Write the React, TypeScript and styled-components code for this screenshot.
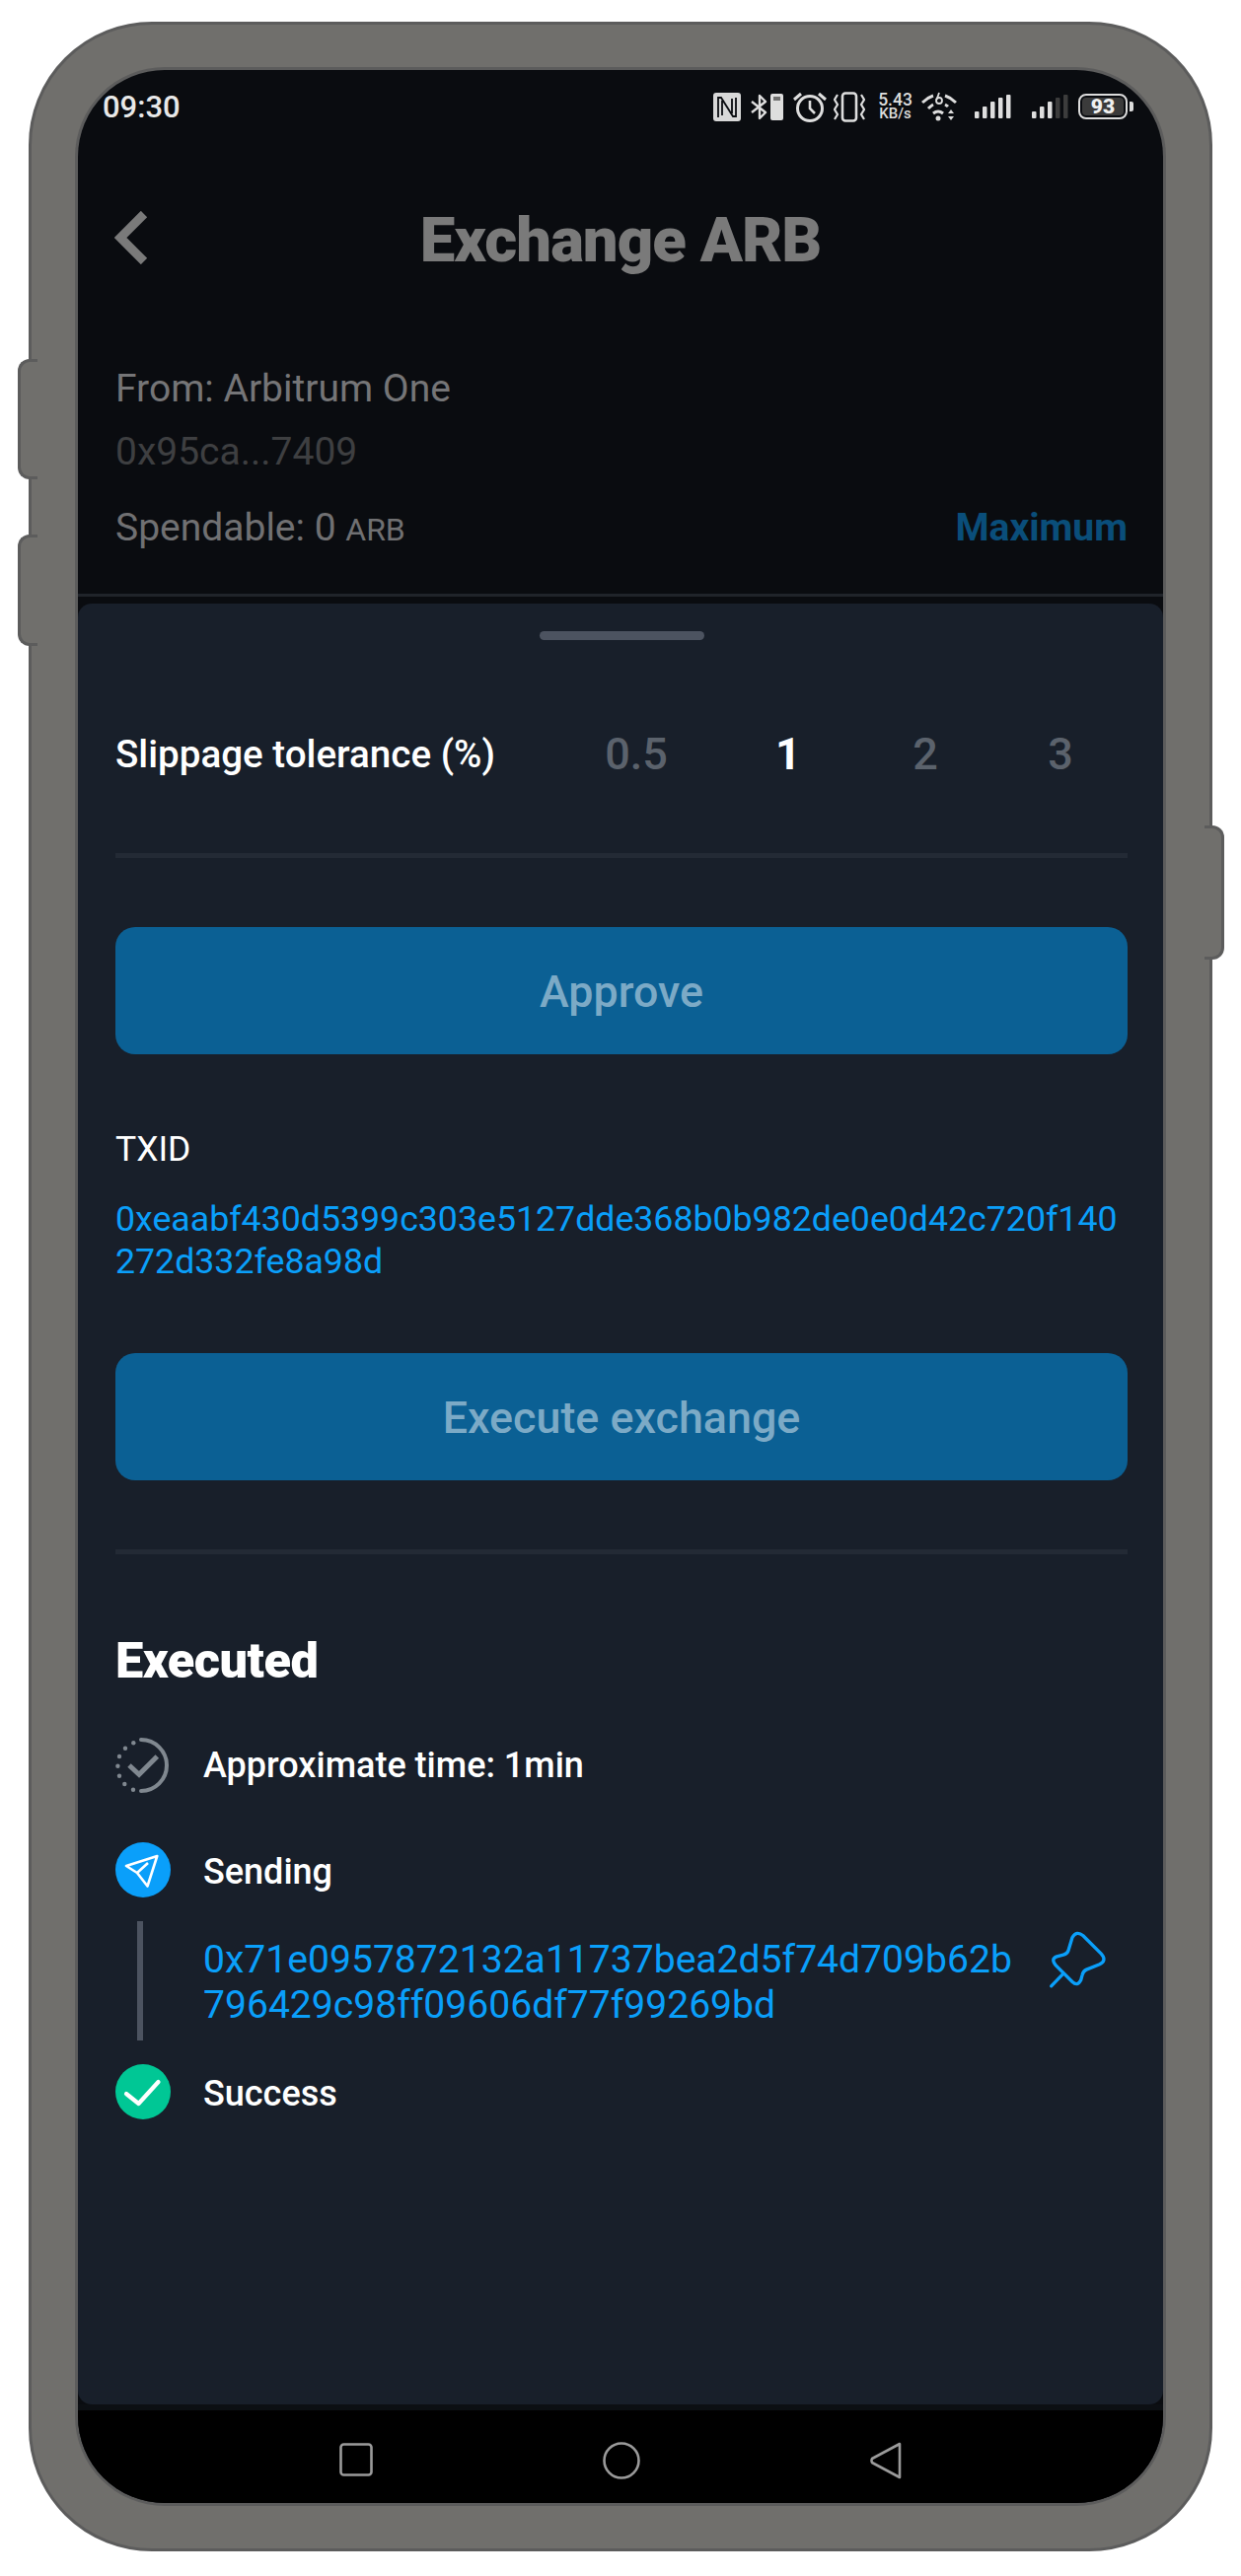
import styled, { createGlobalStyle } from "styled-components";

const GlobalStyle = createGlobalStyle`
  html, body {
    margin: 0;
    padding: 0;
    background: #ffffff;
  }
  body {
    font-family: Roboto, "Liberation Sans", sans-serif;
  }
`;

const Page = styled.div`
  width: 1258px;
  height: 2612px;
  box-sizing: border-box;
  padding: 22px 29px 25px;
`;

const Phone = styled.div`
  position: relative;
  width: 1200px;
  height: 2565px;
  box-sizing: border-box;
  padding: 46px 47px;
  background: #706f6c;
  border: 3px solid #5c5c5c;
  border-radius: 125px;
`;

const SideKey = styled.div<{ $side: "left" | "right"; $top: number; $height: number }>`
  position: absolute;
  top: ${(p) => p.$top}px;
  height: ${(p) => p.$height}px;
  width: 20px;
  box-sizing: border-box;
  background: #706f6c;
  border: 3px solid #5c5c5c;
  ${(p) =>
    p.$side === "left"
      ? "left: -14px; border-right: none; border-radius: 12px 0 0 12px;"
      : "right: -15px; border-left: none; border-radius: 0 12px 12px 0;"}
`;

const Screen = styled.div`
  height: 2467px;
  display: flex;
  flex-direction: column;
  overflow: hidden;
  background: #0a0c10;
  border-radius: 88px;
  box-shadow: 0 0 0 3px #5c5c5c;
`;

const Dimmed = styled.div`
  height: 534px;
  flex: none;
  box-sizing: border-box;
  border-bottom: 3px solid #20242a;
  margin-bottom: 7px;
`;

const StatusBar = styled.div`
  height: 74px;
  box-sizing: border-box;
  padding: 0 30px 0 25px;
  display: flex;
  align-items: center;
  justify-content: space-between;
`;

const Time = styled.span`
  font-size: 31px;
  font-weight: 500;
  color: #e8e8e8;
`;

const StatusIcons = styled.div`
  display: flex;
  align-items: center;
`;

const StatusIcon = styled.svg<{ $gap?: number }>`
  display: block;
  flex: none;
  margin-left: ${(p) => p.$gap ?? 9}px;
`;

const Speed = styled.div`
  width: 35px;
  margin-left: 13px;
  display: flex;
  flex-direction: column;
  align-items: center;
  color: #dedede;
  font-weight: 500;
  line-height: 14px;
`;

const SpeedValue = styled.span`
  font-size: 17.5px;
`;

const SpeedUnit = styled.span`
  font-size: 15px;
`;

const Battery = styled.div`
  margin-left: 10px;
  width: 56px;
  height: 24px;
  display: flex;
  align-items: center;
`;

const BatteryShell = styled.div`
  width: 50px;
  height: 26px;
  box-sizing: border-box;
  padding: 2px;
  border: 2px solid #dcdcdc;
  border-radius: 8px;
`;

const BatteryFill = styled.div`
  height: 100%;
  display: flex;
  align-items: center;
  justify-content: center;
  background: #3b3b3b;
  border-radius: 4px;
  color: #f0f0f0;
  font-size: 21px;
  font-weight: 900;
  line-height: 16px;
`;

const BatteryTip = styled.div`
  width: 4px;
  height: 10px;
  margin-left: 2px;
  background: #dcdcdc;
  border-radius: 0 2px 2px 0;
`;

const Header = styled.div`
  position: relative;
  height: 196px;
  display: flex;
  align-items: center;
  justify-content: center;
`;

const Back = styled.svg`
  position: absolute;
  left: 37px;
  top: 69px;
`;

const Title = styled.h1`
  margin: 0;
  font-size: 63.5px;
  font-weight: 900;
  letter-spacing: -1px;
  color: #7a7a7a;
`;

const Info = styled.div`
  margin-top: 21px;
  padding: 0 36px 0 38px;
`;

const InfoLine = styled.div<{ $tone?: string; $top?: number }>`
  height: 64px;
  margin-top: ${(p) => p.$top ?? 0}px;
  display: flex;
  align-items: center;
  justify-content: space-between;
  font-size: 39px;
  color: ${(p) => p.$tone ?? "#757577"};
`;

const Unit = styled.span`
  font-size: 32px;
`;

const Maximum = styled.span`
  font-weight: 700;
  color: #0a4e7a;
`;

const Sheet = styled.div`
  height: 1826px;
  flex: none;
  box-sizing: border-box;
  padding: 28px 36px 0 38px;
  display: flex;
  flex-direction: column;
  background: #181f2a;
  border-radius: 14px;
`;

const Handle = styled.div`
  width: 167px;
  height: 9px;
  margin: 0 auto;
  border-radius: 5px;
  background: #4c5360;
`;

const SlippageRow = styled.div`
  height: 80px;
  margin-top: 75px;
  display: flex;
  align-items: center;
  justify-content: space-between;
`;

const SlippageLabel = styled.span`
  font-size: 38.6px;
  font-weight: 500;
  color: #ffffff;
`;

const Options = styled.div`
  display: grid;
  grid-template-columns: 168px 140px 138px 136px;
  justify-items: center;
`;

const Option = styled.span<{ $active?: boolean }>`
  font-size: 45px;
  font-weight: ${(p) => (p.$active ? 700 : 500)};
  color: ${(p) => (p.$active ? "#ffffff" : "#5b626c")};
`;

const Divider = styled.div<{ $top: number }>`
  height: 5px;
  margin-top: ${(p) => p.$top}px;
  background: #232a35;
`;

const ActionButton = styled.button<{ $top: number }>`
  display: block;
  width: 100%;
  height: 129px;
  margin-top: ${(p) => p.$top}px;
  padding: 2px 0 0;
  border: none;
  border-radius: 20px;
  background: #0b6094;
  color: #7caac6;
  font-family: inherit;
  font-size: 44.8px;
  font-weight: 500;
`;

const TxLabel = styled.div`
  height: 44px;
  margin-top: 74px;
  display: flex;
  align-items: center;
  font-size: 35.5px;
  color: #ffffff;
`;

const TxHash = styled.div`
  margin-top: 28px;
  font-size: 35.7px;
  line-height: 43px;
  color: #0a9ffa;
  word-break: break-all;
`;

const SectionTitle = styled.h2`
  height: 60px;
  margin: 77px 0 2px;
  display: flex;
  align-items: center;
  font-size: 50.5px;
  font-weight: 900;
  letter-spacing: -0.5px;
  color: #ffffff;
`;

const Step = styled.div<{ $top: number }>`
  height: 56px;
  margin-top: ${(p) => p.$top}px;
  display: flex;
  align-items: center;
  gap: 33px;
`;

const StepLabel = styled.span<{ $drop?: number }>`
  padding-top: ${(p) => p.$drop ?? 0}px;
  font-size: 36px;
  font-weight: 500;
  color: #ffffff;
`;

const Badge = styled.div<{ $color: string }>`
  width: 56px;
  height: 56px;
  flex: none;
  border-radius: 50%;
  background: ${(p) => p.$color};
`;

const HashRow = styled.div`
  height: 121px;
  margin-top: 24px;
  display: flex;
  align-items: center;
`;

const Connector = styled.div`
  width: 6px;
  height: 100%;
  margin: 0 61px 0 22px;
  flex: none;
  background: #4c5360;
`;

const StepHash = styled.div`
  width: 835px;
  flex: none;
  padding-top: 3px;
  font-size: 39.1px;
  line-height: 46px;
  color: #0a9ffa;
  word-break: break-all;
`;

const Pin = styled.svg`
  flex: none;
  align-self: flex-start;
  margin: 8px 0 0 22px;
`;

const BottomBand = styled.div`
  height: 6px;
  flex: none;
  background: #0c0f13;
`;

const NavBar = styled.div`
  flex: 1;
  display: flex;
  align-items: flex-start;
  justify-content: center;
  gap: 233px;
  padding-top: 32px;
  background: #000000;
`;

const signalBars = [
  [0, 7],
  [8, 12],
  [16, 17],
  [24, 21],
  [32, 24],
];

function Signal({ dim, gap }: { dim: number; gap: number }) {
  return (
    <StatusIcon $gap={gap} width="37" height="24" viewBox="0 0 37 24">
      {signalBars.map(([x, h], i) => (
        <rect
          key={x}
          x={x}
          y={24 - h}
          width="4.5"
          height={h}
          rx="1"
          fill={i >= signalBars.length - dim ? "#3c3c3c" : "#dedede"}
        />
      ))}
    </StatusIcon>
  );
}

export default function App() {
  return (
    <>
      <GlobalStyle />
      <Page>
        <Phone>
          <SideKey $side="left" $top={339} $height={122} />
          <SideKey $side="left" $top={517} $height={113} />
          <SideKey $side="right" $top={812} $height={136} />
          <Screen>
            <Dimmed>
              <StatusBar>
                <Time>09:30</Time>
                <StatusIcons>
                  <StatusIcon $gap={0} width="28" height="29" viewBox="0 0 28 29">
                    <rect x="0" y="0" width="28" height="29" rx="3" fill="#d8d8d8" />
                    <path
                      d="M5 25V5h3l12 19h3V5M9 8v15M19 6v15"
                      fill="none"
                      stroke="#0a0c10"
                      strokeWidth="1.8"
                    />
                  </StatusIcon>
                  <StatusIcon width="35" height="29" viewBox="0 0 35 29" fill="none">
                    <path
                      d="M2 9l14 11-6 6V3l6 6L2 20"
                      stroke="#dedede"
                      strokeWidth="2.4"
                      strokeLinejoin="round"
                    />
                    <rect x="21" y="1" width="13" height="27" rx="2" fill="#dedede" />
                    <rect x="24" y="4" width="7" height="4" fill="#70706f" />
                  </StatusIcon>
                  <StatusIcon width="34" height="31" viewBox="0 0 34 31" fill="none" stroke="#dedede">
                    <circle cx="17" cy="17" r="12.5" strokeWidth="3" />
                    <path d="M17 9v8l5 5" strokeWidth="2.6" />
                    <path d="M1 8l7-6M33 8l-7-6" strokeWidth="3" />
                  </StatusIcon>
                  <StatusIcon $gap={7} width="32" height="31" viewBox="0 0 32 31" fill="none" stroke="#dedede">
                    <rect x="9" y="1.5" width="14" height="28" rx="3" strokeWidth="2.6" />
                    <path d="M4 3L1 8l3 5-3 5 3 5-3 5M28 3l3 5-3 5 3 5-3 5 3 5" strokeWidth="2.2" />
                  </StatusIcon>
                  <Speed>
                    <SpeedValue>5.43</SpeedValue>
                    <SpeedUnit>KB/s</SpeedUnit>
                  </Speed>
                  <StatusIcon width="36" height="30" viewBox="0 0 36 30" fill="none" stroke="#dedede">
                    <path d="M1 11Q6 6 12 4M24 4Q30 6 35 11" strokeWidth="3" />
                    <path d="M7 17Q10 14 12 13M24 13Q26 14 27 15" strokeWidth="3" />
                    <path d="M12 22Q17 18 22 22" strokeWidth="3" />
                    <circle cx="17" cy="27" r="2.5" fill="#dedede" stroke="none" />
                    <circle cx="18" cy="9" r="3" strokeWidth="1.8" />
                    <path d="M15.5 8L18 1" strokeWidth="1.8" />
                    <path d="M27 22l3-4 3 4zM27 25h6l-3 4z" fill="#dedede" stroke="none" />
                  </StatusIcon>
                  <Signal dim={0} gap={18} />
                  <Signal dim={2} gap={21} />
                  <Battery>
                    <BatteryShell>
                      <BatteryFill>93</BatteryFill>
                    </BatteryShell>
                    <BatteryTip />
                  </Battery>
                </StatusIcons>
              </StatusBar>
              <Header>
                <Back width="34" height="54" viewBox="0 0 34 54" fill="none">
                  <path d="M30 3L6 27l24 24" stroke="#7a7a7a" strokeWidth="9" />
                </Back>
                <Title>Exchange ARB</Title>
              </Header>
              <Info>
                <InfoLine>From: Arbitrum One</InfoLine>
                <InfoLine $tone="#3e3f41">0x95ca...7409</InfoLine>
                <InfoLine $tone="#707072" $top={13}>
                  <span>
                    Spendable: 0 <Unit>ARB</Unit>
                  </span>
                  <Maximum>Maximum</Maximum>
                </InfoLine>
              </Info>
            </Dimmed>
            <Sheet>
              <Handle />
              <SlippageRow>
                <SlippageLabel>Slippage tolerance (%)</SlippageLabel>
                <Options>
                  <Option>0.5</Option>
                  <Option $active>1</Option>
                  <Option>2</Option>
                  <Option>3</Option>
                </Options>
              </SlippageRow>
              <Divider $top={61} />
              <ActionButton $top={70}>Approve</ActionButton>
              <TxLabel>TXID</TxLabel>
              <TxHash>0xeaabf430d5399c303e5127dde368b0b982de0e0d42c720f140272d332fe8a98d</TxHash>
              <ActionButton $top={71}>Execute exchange</ActionButton>
              <Divider $top={70} />
              <SectionTitle>Executed</SectionTitle>
              <Step $top={47}>
                <svg width="56" height="56" viewBox="0 0 56 56" fill="none">
                  <path d="M26 2a26 26 0 0 1 0 52" stroke="#808890" strokeWidth="4" strokeLinecap="round" />
                  <g fill="#808890">
                    <circle cx="18.3" cy="5.3" r="2.2" />
                    <circle cx="10" cy="10.7" r="2.2" />
                    <circle cx="4" cy="19" r="2.2" />
                    <circle cx="2.4" cy="28.7" r="2.2" />
                    <circle cx="4" cy="38.7" r="2.2" />
                    <circle cx="9.3" cy="47" r="2.2" />
                    <circle cx="18" cy="52.7" r="2.2" />
                  </g>
                  <path d="M14 28l10 9.3L42.3 19" stroke="#808890" strokeWidth="5" />
                </svg>
                <StepLabel>Approximate time: 1min</StepLabel>
              </Step>
              <Step $top={50}>
                <Badge $color="#0a9ffa">
                  <svg width="56" height="56" viewBox="0 0 56 56" fill="none">
                    <path
                      d="M42.3 14L11 24l11 7 10.5 13.5zM22 31l11-10"
                      stroke="#ffffff"
                      strokeWidth="2.6"
                      strokeLinejoin="round"
                    />
                  </svg>
                </Badge>
                <StepLabel $drop={3}>Sending</StepLabel>
              </Step>
              <HashRow>
                <Connector />
                <StepHash>0x71e0957872132a11737bea2d5f74d709b62b796429c98ff09606df77f99269bd</StepHash>
                <Pin width="60" height="62" viewBox="190 105 180 185" fill="none">
                  <path
                    d="M250 170L262 130Q275 108 295 125L350 180Q368 200 345 212L305 228Q295 232 292 245L288 260Q278 280 262 265L212 215Q195 195 215 188L235 183Q247 180 250 170ZM235 240L198 278"
                    stroke="#0a9ffa"
                    strokeWidth="10"
                    strokeLinecap="round"
                  />
                </Pin>
              </HashRow>
              <Step $top={24}>
                <Badge $color="#00c795">
                  <svg width="56" height="56" viewBox="0 0 56 56" fill="none">
                    <path
                      d="M11 30l12.5 10L43.5 18"
                      stroke="#ffffff"
                      strokeWidth="4.2"
                      strokeLinecap="round"
                      strokeLinejoin="round"
                    />
                  </svg>
                </Badge>
                <StepLabel $drop={3}>Success</StepLabel>
              </Step>
            </Sheet>
            <BottomBand />
            <NavBar>
              <svg width="34" height="36" viewBox="0 0 34 36" fill="none">
                <rect x="1.5" y="2.5" width="31" height="31" rx="3" stroke="#9a9a9a" strokeWidth="2.6" />
              </svg>
              <svg width="38" height="38" viewBox="0 0 38 38" fill="none">
                <circle cx="19" cy="19" r="17.5" stroke="#9a9a9a" strokeWidth="2.6" />
              </svg>
              <svg width="32" height="38" viewBox="0 0 32 38" fill="none">
                <path
                  d="M30 2v34L2 21q-1-2 0-4z"
                  stroke="#9a9a9a"
                  strokeWidth="2.6"
                  strokeLinejoin="round"
                />
              </svg>
            </NavBar>
          </Screen>
        </Phone>
      </Page>
    </>
  );
}
